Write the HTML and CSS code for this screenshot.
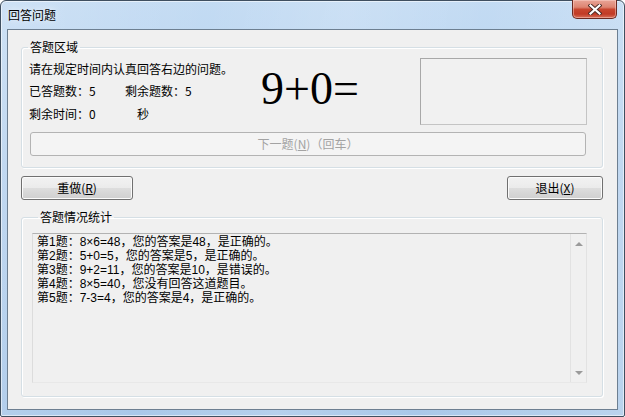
FILE: index.html
```html
<!DOCTYPE html>
<html lang="zh-CN">
<head>
<meta charset="utf-8">
<title>回答问题</title>
<link rel="stylesheet" href="styles.css">
</head>
<body>
<div class="window">
  <div class="titlebar">
    <span class="title">回答问题</span>
    <div class="close">
      <svg width="14" height="11" viewBox="0 0 14 11">
        <path d="M2.5 1.5 L11.5 9.5 M11.5 1.5 L2.5 9.5" stroke="#4a2a24" stroke-width="4" stroke-linecap="square"/>
        <path d="M2.5 1.5 L11.5 9.5 M11.5 1.5 L2.5 9.5" stroke="#ffffff" stroke-width="2.2" stroke-linecap="square"/>
      </svg>
    </div>
  </div>
  <div class="client">
    <fieldset class="group group-answer">
      <legend>答题区域</legend>
      <div class="answer-top">
        <div class="info">
          <div class="line">请在规定时间内认真回答右边的问题。</div>
          <div class="line"><span class="cell-a">已答题数：5</span><span>剩余题数：5</span></div>
          <div class="line"><span class="cell-b">剩余时间：0</span><span>秒</span></div>
        </div>
        <div class="expr">9+0=</div>
        <div class="answer-box"></div>
      </div>
      <div class="next-btn">下一题(<u>N</u>)（回车）</div>
    </fieldset>
    <div class="btn-row">
      <div class="btn btn-redo">重做(<u>R</u>)</div>
      <div class="btn btn-exit">退出(<u>X</u>)</div>
    </div>
    <fieldset class="group group-stats">
      <legend>答题情况统计</legend>
      <div class="log">
        <div class="log-text">
          <div>第1题：8×6=48，您的答案是48，是正确的。</div>
          <div>第2题：5+0=5，您的答案是5，是正确的。</div>
          <div>第3题：9+2=11，您的答案是10，是错误的。</div>
          <div>第4题：8×5=40，您没有回答这道题目。</div>
          <div>第5题：7-3=4，您的答案是4，是正确的。</div>
        </div>
        <div class="scrollbar">
          <span class="arrow arrow-up"></span>
          <span class="arrow arrow-down"></span>
        </div>
      </div>
    </fieldset>
  </div>
</div>
</body>
</html>
```
FILE: styles.css
```css
* { box-sizing: border-box; }
html, body { margin: 0; padding: 0; background: #ffffff; }
body {
  font-family: "Noto Sans CJK SC", "Liberation Sans", sans-serif;
  font-size: 12px;
  color: #000;
}
.window {
  width: 625px;
  height: 417px;
  border: 1px solid #3f4f60;
  border-radius: 6px 6px 2px 2px;
  background:
    linear-gradient(100deg, rgba(255,255,255,0.18) 0%, rgba(255,255,255,0) 30%, rgba(255,255,255,0.15) 50%, rgba(255,255,255,0) 70%, rgba(255,255,255,0.2) 100%),
    linear-gradient(180deg, #c3dbf3 0%, #b6d1ee 40%, #a9c8e9 100%);
  box-shadow: inset 0 0 0 1px rgba(255,255,255,0.55);
  padding: 0 6px 6px 6px;
  display: flex;
  flex-direction: column;
}
.titlebar {
  height: 28px;
  display: flex;
  align-items: flex-start;
  margin-left: -6px;
  margin-right: -6px;
  padding-left: 7px;
  padding-right: 7px;
}
.title {
  line-height: 28px;
  font-size: 12px;
  color: #000;
  text-shadow: 0 0 6px rgba(255,255,255,0.9);
}
.close {
  margin-left: auto;
  width: 45px;
  height: 19px;
  margin-top: -1px;
  border: 1px solid #6b2a22;
  border-top: none;
  border-radius: 0 0 5px 5px;
  background: linear-gradient(180deg, #e9a597 0%, #dd8471 40%, #c8462f 52%, #c13b26 78%, #d8705a 100%);
  box-shadow: inset 0 0 0 1px rgba(255,220,210,0.45);
  display: flex;
  align-items: center;
  justify-content: center;
}
.client {
  flex: 1;
  border: 1px solid #6d7f91;
  background: #f0f0f0;
  display: flex;
  flex-direction: column;
  padding: 0 14px 12px 13px;
}
.group {
  margin: 10px 0 0 0;
  padding: 0;
  min-width: 0;
  border: 1px solid #d5dfe5;
  border-radius: 3px;
  box-shadow: 1px 1px 0 #fff, inset 1px 1px 0 #fff;
}
.group legend {
  margin-left: 6px;
  padding: 0 2px;
  line-height: 14px;
  font-size: 12px;
}
.answer-top {
  display: flex;
  height: 78px;
  padding-left: 7px;
}
.info {
  width: 232px;
  padding-top: 4px;
}
.line {
  line-height: 22px;
  height: 22px;
  white-space: nowrap;
}
.line:nth-child(3) { line-height: 24px; height: 24px; }
.cell-a { display: inline-block; width: 96px; }
.cell-b { display: inline-block; width: 108px; }
.expr {
  font-family: "Liberation Serif", serif;
  font-size: 46px;
  line-height: 52px;
  margin-top: 9px;
  height: 52px;
  white-space: nowrap;
}
.answer-box {
  margin-left: auto;
  margin-right: 15px;
  margin-top: 4px;
  width: 167px;
  height: 67px;
  border: 1px solid #a8a8a8;
  border-right-color: #c4c4c4;
  border-bottom-color: #c4c4c4;
  background: #f1f1f1;
}
.next-btn {
  margin: 0 16px 11px 8px;
  height: 24px;
  border: 1px solid #b3b3b3;
  border-radius: 3px;
  background: #f4f4f4;
  color: #a3a3a3;
  text-align: center;
  line-height: 22px;
  font-size: 12px;
}
.btn-row {
  display: flex;
  justify-content: space-between;
  margin-top: 8px;
}
.btn {
  height: 24px;
  border: 1px solid #707070;
  border-radius: 3px;
  background: linear-gradient(180deg, #f2f2f2 0%, #ebebeb 48%, #dddddd 52%, #cfcfcf 100%);
  box-shadow: inset 0 0 0 1px #fbfbfb;
  text-align: center;
  line-height: 22px;
  font-size: 12px;
}
.btn-redo { width: 112px; }
.btn-exit { width: 96px; }
.group-stats {
  flex: 1;
  display: flex;
  flex-direction: column;
  padding: 9px 15px 13px 10px;
}
.log {
  flex: 1;
  display: flex;
  border: 1px solid #b2b2b2;
  border-left-color: #dcdcdc;
  border-bottom-color: #e8e8e8;
  border-right-color: #e2e2e2;
  background: #f0f0f0;
}
.log-text {
  flex: 1;
  padding: 1px 0 0 4px;
  font-family: "Liberation Sans", "Noto Sans CJK SC", sans-serif;
  line-height: 14px;
  font-size: 12px;
  white-space: nowrap;
}
.scrollbar {
  width: 16px;
  border-left: 1px solid #e2e2e2;
  display: flex;
  flex-direction: column;
  justify-content: space-between;
  align-items: center;
  padding: 8px 0 7px 0;
}
.arrow {
  width: 0;
  height: 0;
  border-left: 4px solid transparent;
  border-right: 4px solid transparent;
}
.arrow-up { border-bottom: 4px solid #9a9a9a; }
.arrow-down { border-top: 4px solid #9a9a9a; }
```
